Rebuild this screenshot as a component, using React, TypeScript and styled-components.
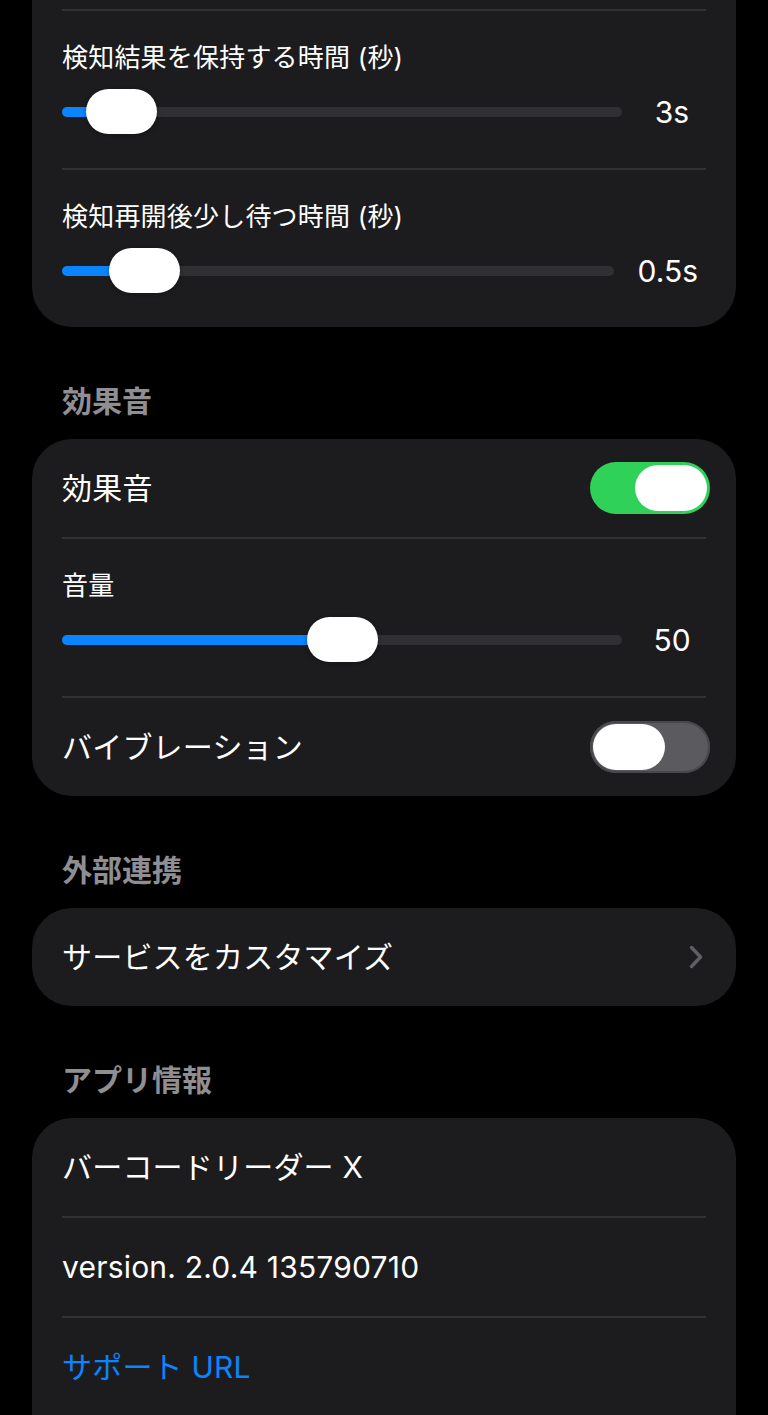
import React from "react";
import styled, { createGlobalStyle } from "styled-components";

const GlobalStyle = createGlobalStyle`
  html, body {
    margin: 0;
    padding: 0;
    background: #000;
  }
  body {
    font-family: "Inter", "Noto Sans CJK JP", sans-serif;
    color: #fff;
    -webkit-font-smoothing: antialiased;
  }
`;

const THUMB_W = 71;

const Page = styled.div`
  width: 768px;
  min-height: 1415px;
  box-sizing: border-box;
  padding: 0 32px 40px;
  background: #000;
  overflow: hidden;
`;

const SectionTitle = styled.h2`
  margin: 55px 0 19px;
  padding-left: 30px;
  font-size: 30px;
  line-height: 38px;
  font-weight: 600;
  color: #8e8e93;
`;

const Card = styled.section<{ $flatTop?: boolean }>`
  background: #1c1c1e;
  border-radius: ${(p) => (p.$flatTop ? "0 0 40px 40px" : "40px")};
  padding-top: ${(p) => (p.$flatTop ? "9px" : "0")};
  overflow: hidden;
`;

const Divider = styled.div`
  height: 2px;
  margin: 0 30px;
  background: #323235;
`;

const Row = styled.div`
  min-height: 98px;
  box-sizing: border-box;
  padding: 0 26px 0 30px;
  display: flex;
  align-items: center;
  justify-content: space-between;
  font-size: 30px;
  line-height: 38px;
`;

const RowLabel = styled.span<{ $link?: boolean }>`
  color: ${(p) => (p.$link ? "#0a84ff" : "#fff")};
  letter-spacing: 0.2px;
`;

const SliderRow = styled.div`
  height: 157px;
  box-sizing: border-box;
  padding: 30px 30px 0;
`;

const SliderLabel = styled.div`
  font-size: 26px;
  line-height: 34px;
  letter-spacing: 0.2px;
`;

const SliderLine = styled.div`
  margin-top: 14px;
  height: 46px;
  display: flex;
  align-items: center;
  gap: 16px;
`;

const Track = styled.div`
  position: relative;
  flex: 1;
  height: 46px;
  &::before {
    content: "";
    position: absolute;
    left: 0;
    right: 0;
    top: 18px;
    height: 10px;
    border-radius: 5px;
    background: #303034;
  }
`;

const Fill = styled.div<{ $f: number }>`
  position: absolute;
  left: 0;
  top: 18px;
  height: 10px;
  border-radius: 5px;
  background: #0a84ff;
  width: calc((100% - ${THUMB_W}px) * ${(p) => p.$f} + ${THUMB_W / 2}px);
`;

const Thumb = styled.div<{ $f: number }>`
  position: absolute;
  top: 0;
  width: ${THUMB_W}px;
  height: 45px;
  border-radius: 23px;
  background: #fff;
  box-shadow: 0 1px 4px rgba(0, 0, 0, 0.35);
  left: calc((100% - ${THUMB_W}px) * ${(p) => p.$f});
`;

const Value = styled.span`
  min-width: 52px;
  padding: 0 8px;
  text-align: center;
  font-size: 30px;
  line-height: 38px;
`;

const ToggleTrack = styled.div<{ $on: boolean }>`
  position: relative;
  width: 120px;
  height: 52px;
  box-sizing: border-box;
  border-radius: 26px;
  background: ${(p) => (p.$on ? "#30d158" : "#5a5a5f")};
  box-shadow: ${(p) => (p.$on ? "none" : "inset 0 0 0 2px #48484c")};
`;

const ToggleKnob = styled.div<{ $on: boolean }>`
  position: absolute;
  top: 3px;
  width: 72px;
  height: 46px;
  border-radius: 23px;
  background: #fff;
  left: ${(p) => (p.$on ? "45px" : "3px")};
`;

const Chevron = styled.svg`
  width: 16px;
  height: 24px;
  margin-right: 6px;
`;

const Slider = ({ label, value, f }: { label: string; value: string; f: number }) => (
  <SliderRow>
    <SliderLabel>{label}</SliderLabel>
    <SliderLine>
      <Track>
        <Fill $f={f} />
        <Thumb $f={f} />
      </Track>
      <Value>{value}</Value>
    </SliderLine>
  </SliderRow>
);

const Toggle = ({ on }: { on: boolean }) => (
  <ToggleTrack $on={on}>
    <ToggleKnob $on={on} />
  </ToggleTrack>
);

export default function App() {
  return (
    <>
      <GlobalStyle />
      <Page>
        <Card $flatTop>
          <Divider />
          <Slider label="検知結果を保持する時間 (秒)" value="3s" f={0.049} />
          <Divider />
          <Slider label="検知再開後少し待つ時間 (秒)" value="0.5s" f={0.098} />
        </Card>

        <SectionTitle>効果音</SectionTitle>
        <Card>
          <Row>
            <RowLabel>効果音</RowLabel>
            <Toggle on />
          </Row>
          <Divider />
          <Slider label="音量" value="50" f={0.5} />
          <Divider />
          <Row>
            <RowLabel>バイブレーション</RowLabel>
            <Toggle on={false} />
          </Row>
        </Card>

        <SectionTitle>外部連携</SectionTitle>
        <Card>
          <Row>
            <RowLabel>サービスをカスタマイズ</RowLabel>
            <Chevron viewBox="0 0 16 24" fill="none">
              <path
                d="M3.5 2.5 L12.5 12 L3.5 21.5"
                stroke="#5e5e63"
                strokeWidth="3.5"
                strokeLinecap="round"
                strokeLinejoin="round"
              />
            </Chevron>
          </Row>
        </Card>

        <SectionTitle>アプリ情報</SectionTitle>
        <Card>
          <Row>
            <RowLabel>バーコードリーダー X</RowLabel>
          </Row>
          <Divider />
          <Row>
            <RowLabel>version. 2.0.4 135790710</RowLabel>
          </Row>
          <Divider />
          <Row>
            <RowLabel $link>サポート URL</RowLabel>
          </Row>
          <Row />
        </Card>
      </Page>
    </>
  );
}
